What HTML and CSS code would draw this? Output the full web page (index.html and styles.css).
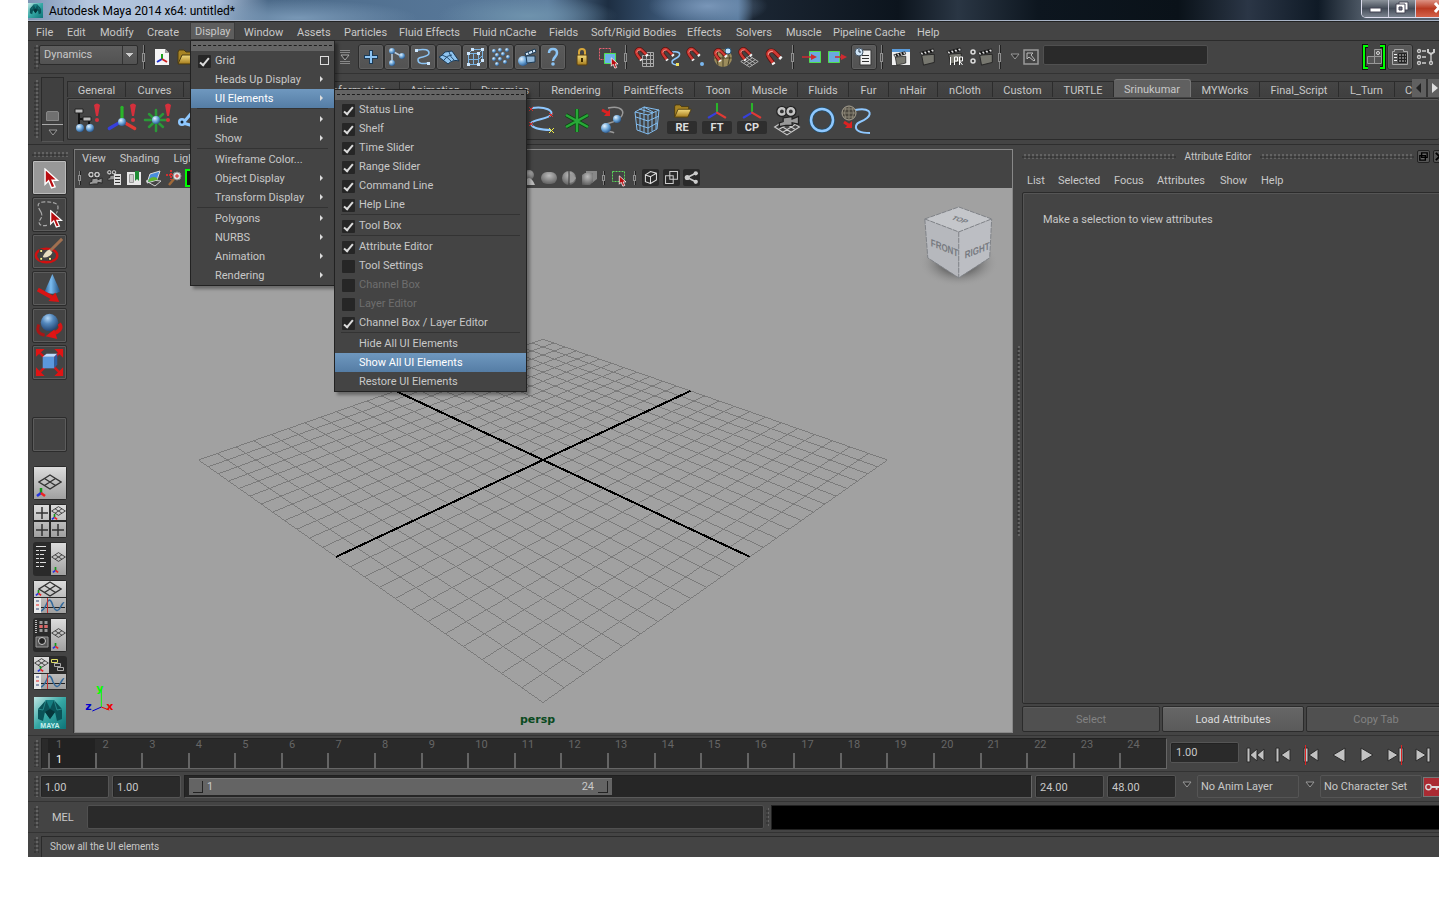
FILE: index.html
```html
<!DOCTYPE html>
<html lang="en">
<head>
<meta charset="UTF-8">
<title>Autodesk Maya 2014 x64: untitled*</title>
<link rel="stylesheet" href="styles.css">
</head>
<body>

<svg class="defs" width="0" height="0" aria-hidden="true">
    <defs>
        <radialGradient id="ball" cx="0.35" cy="0.3" r="0.8"><stop offset="0" stop-color="#e4f3ff"/><stop offset="0.5" stop-color="#6da6d8"/><stop offset="1" stop-color="#1e4a80"/></radialGradient>
        <radialGradient id="bigball" cx="0.4" cy="0.25" r="0.8"><stop offset="0" stop-color="#b4d8f8"/><stop offset="0.4" stop-color="#5488bc"/><stop offset="1" stop-color="#1c3c68"/></radialGradient>
        <radialGradient id="grayball" cx="0.5" cy="0.3" r="0.8"><stop offset="0" stop-color="#bbb"/><stop offset="1" stop-color="#555"/></radialGradient>
        <linearGradient id="cone"><stop offset="0" stop-color="#2a6294"/><stop offset="0.4" stop-color="#7bbcf0"/><stop offset="1" stop-color="#1c4a7a"/></linearGradient>
        <linearGradient id="gold" x2="0" y2="1"><stop offset="0" stop-color="#f4dc80"/><stop offset="1" stop-color="#a67c1c"/></linearGradient>
        <linearGradient id="tile" x2="0" y2="1"><stop offset="0" stop-color="#dcdcdc"/><stop offset="1" stop-color="#a0a0a0"/></linearGradient>
        <linearGradient id="teal" x2="1" y2="1"><stop offset="0" stop-color="#bfe6e4"/><stop offset="0.5" stop-color="#35a7a4"/><stop offset="1" stop-color="#0d7478"/></linearGradient>
    </defs>

    <symbol id="i-maya" viewBox="0 0 32 32">
        <rect width="32" height="32" fill="url(#teal)"/>
        <path d="M4 22V12L12 3h8l8 9v10l-5 2-2-9-5 7-5-7-2 9z" fill="#0a5358"/>
        <path d="M12 3L9 13l-5-1M20 3l3 10 5-1" fill="none" stroke="#2f9d9d" stroke-width="0.700"/>
        <path d="M12 3h8l-4 9z" fill="#167f82"/>
        <path d="M11 15l5 7 5-7-5-3z" fill="#06363b"/>
    </symbol>
    <symbol id="i-tripod" viewBox="0 0 32 32">
        <path d="M16 17V4" stroke="#2ab52a" stroke-width="3" stroke-linecap="round"/>
        <path d="M16 17L4 24" stroke="#3640dc" stroke-width="3" stroke-linecap="round"/>
        <path d="M16 17l12 7" stroke="#e03a34" stroke-width="3" stroke-linecap="round"/>
    </symbol>
    <symbol id="i-bang" viewBox="0 0 8 20"><path d="M1 2q3-3 6 0L5 13H3z" fill="#d5303c"/><circle cx="4" cy="17" r="2" fill="#d5303c"/></symbol>
    <symbol id="i-new" viewBox="0 0 20 20">
        <path d="M3 2h10l4 4v12H3z" fill="#f4f4f4"/><path d="M13 2v4h4z" fill="#999"/>
        <path d="M10 12V7" stroke="#1ba01b" stroke-width="2"/><path d="M10 12l-5 3" stroke="#2030d0" stroke-width="2"/><path d="M10 12l5 3" stroke="#d02020" stroke-width="2"/>
    </symbol>
    <symbol id="i-folder" viewBox="0 0 20 16">
        <path d="M1 14V3l1-2h5l2 2h8v3" fill="#a88424" stroke="#4a3a10"/><path d="M1 15L5 6h15l-4 9z" fill="url(#gold)" stroke="#4a3a10"/>
    </symbol>
    <symbol id="i-cursor" viewBox="0 0 14 18"><path d="M2 1v13l3-3 2.500 6 3-1L8 10.500h4.500z" fill="#b80c10" stroke="#fff" stroke-width="1.200"/></symbol>
    <symbol id="i-magnet" viewBox="0 0 16 16">
        <path d="M7 13L4 9C0 4 5 0 9 4l4 4" fill="none" stroke="#5c120e" stroke-width="4"/>
        <path d="M7 13L4 9C0 4 5 0 9 4l4 4" fill="none" stroke="#d03a34" stroke-width="2.500"/>
        <path d="M3 6q0-3 4-3" fill="none" stroke="#f09a90"/>
        <path d="M7 13l1 1.500M13 8l1.500 1.500" stroke="#f4f4f4" stroke-width="3"/>
    </symbol>
    <symbol id="i-clap" viewBox="0 0 20 20">
        <path d="M3 8l14-1v9L5 19z" fill="#77776f" stroke="#222"/>
        <path d="M1 5l15-4 1 3L3 8z" fill="#ddd" stroke="#222"/><path d="M4 4l2 3M8 3l2 3M12 2l2 3" stroke="#111" stroke-width="2"/>
    </symbol>
    <symbol id="i-camera" viewBox="0 0 20 18">
        <circle cx="6" cy="5" r="4" fill="#c4c4c4" stroke="#222"/><circle cx="13" cy="5" r="4" fill="#c4c4c4" stroke="#222"/>
        <circle cx="6" cy="5" r="1.500" fill="#333"/><circle cx="13" cy="5" r="1.500" fill="#333"/>
        <path d="M7 10l7-1v2l5-2v6l-5-1v2H9l-5 1v-3l3-1z" fill="#999" stroke="#222"/>
    </symbol>
    <symbol id="i-mesh" viewBox="0 0 24 16"><path d="M12 1l11 7-11 7L1 8zM6.500 4.500l11 7M17.500 4.500l-11 7" fill="none" stroke="currentColor" stroke-width="1.400"/></symbol>
    <symbol id="i-floor" viewBox="0 0 24 16"><path d="M12 1l11 7-11 7L1 8zM8.300 3.300l11 7M4.700 5.700l11 7M15.700 3.300l-11 7M19.300 5.700l-11 7" fill="none" stroke="currentColor"/></symbol>
    <symbol id="i-minitri" viewBox="0 0 10 9"><path d="M5 5V0" stroke="#15951a" stroke-width="2.500"/><path d="M5 5L1 8" stroke="#2434e0" stroke-width="2.500"/><path d="M5 5l4 3" stroke="#e22" stroke-width="2.500"/></symbol>
    <symbol id="i-curve" viewBox="0 0 24 15">
        <path d="M0 9.500h24" stroke="#222"/><path d="M0 13Q3 12 6 5t6 3q4 8 7 2t4-5" fill="none" stroke="#33699b" stroke-width="1.500"/><path d="M6.500 0v15" stroke="#c43030"/>
    </symbol>
    <symbol id="i-down" viewBox="0 0 10 8"><path d="M1 1h8L5 6z" fill="#333" stroke="#999"/></symbol>
</svg>

<div class="app">

    <header class="titlebar">
        <svg class="app-icon"><use href="#i-maya"/></svg>
        <h1>Autodesk Maya 2014 x64: untitled*</h1>
        <div class="window-buttons">
            <button aria-label="Minimize"><svg viewBox="0 0 26 17"><rect x="8" y="8" width="11" height="4" fill="#fff" stroke="#445"/></svg></button>
            <button aria-label="Restore"><svg viewBox="0 0 26 17"><path d="M10 2h9v8h-9z" fill="#fff" stroke="#445"/><path d="M7 4h9v9H7z" fill="#fff" stroke="#445"/><path d="M10 7h3v3h-3z" fill="#778" stroke="#445"/></svg></button>
            <button class="close" aria-label="Close"><svg viewBox="0 0 26 17"><path d="M19 3l8 9M27 3l-8 9" stroke="#fff" stroke-width="3"/></svg></button>
        </div>
    </header>

    <nav class="menubar">
        <button>File</button>
        <button>Edit</button>
        <button>Modify</button>
        <button>Create</button>
        <div class="menu-root">
            <button class="open">Display</button>
            <ul class="menu">
                <li class="tearoff"></li>
                <li><label class="item check"><input type="checkbox" checked> Grid</label><button class="option-box" aria-label="Grid options"></button></li>
                <li><button class="item sub">Heads Up Display</button></li>
                <li><button class="item sub active">UI Elements</button>
                    <ul class="menu submenu">
                        <li class="tearoff"></li>
                        <li><label class="item check"><input type="checkbox" checked> Status Line</label></li>
                        <li><label class="item check"><input type="checkbox" checked> Shelf</label></li>
                        <li><label class="item check"><input type="checkbox" checked> Time Slider</label></li>
                        <li><label class="item check"><input type="checkbox" checked> Range Slider</label></li>
                        <li><label class="item check"><input type="checkbox" checked> Command Line</label></li>
                        <li><label class="item check"><input type="checkbox" checked> Help Line</label></li>
                        <li class="rule"></li>
                        <li><label class="item check"><input type="checkbox" checked> Tool Box</label></li>
                        <li class="rule"></li>
                        <li><label class="item check"><input type="checkbox" checked> Attribute Editor</label></li>
                        <li><label class="item check"><input type="checkbox"> Tool Settings</label></li>
                        <li><label class="item check disabled"><input type="checkbox" disabled> Channel Box</label></li>
                        <li><label class="item check disabled"><input type="checkbox" disabled> Layer Editor</label></li>
                        <li><label class="item check"><input type="checkbox" checked> Channel Box / Layer Editor</label></li>
                        <li class="rule"></li>
                        <li><button class="item">Hide All UI Elements</button></li>
                        <li><button class="item active">Show All UI Elements</button></li>
                        <li><button class="item">Restore UI Elements</button></li>
                    </ul>
                </li>
                <li class="rule"></li>
                <li><button class="item sub">Hide</button></li>
                <li><button class="item sub">Show</button></li>
                <li class="rule"></li>
                <li><button class="item">Wireframe Color...</button></li>
                <li><button class="item sub">Object Display</button></li>
                <li><button class="item sub">Transform Display</button></li>
                <li class="rule"></li>
                <li><button class="item sub">Polygons</button></li>
                <li><button class="item sub">NURBS</button></li>
                <li><button class="item sub">Animation</button></li>
                <li><button class="item sub">Rendering</button></li>
            </ul>
        </div>
        <button>Window</button>
        <button>Assets</button>
        <button>Particles</button>
        <button>Fluid Effects</button>
        <button>Fluid nCache</button>
        <button>Fields</button>
        <button>Soft/Rigid Bodies</button>
        <button>Effects</button>
        <button>Solvers</button>
        <button>Muscle</button>
        <button>Pipeline Cache</button>
        <button>Help</button>
    </nav>

    <div class="statusline">
        <span class="grip"></span>
        <select class="menuset" aria-label="Menu set"><option>Dynamics</option></select>
        <span class="sep"></span>
        <div class="group file-group">
            <button class="tool" aria-label="New scene"><svg viewBox="0 0 26 26"><use href="#i-new" x="3" y="3" width="20" height="20"/></svg></button>
            <button class="tool" aria-label="Open scene"><svg viewBox="0 0 26 26"><use href="#i-folder" x="2" y="5" width="20" height="16"/></svg></button>
        </div>
        <button class="tool" aria-label="Selection mask"><svg viewBox="0 0 26 26"><path d="M8 6.500h10M8 8.500h10M8 17.500h10M8 19.500h10" stroke="#888"/><path d="M9 11h8l-4 5z" fill="#333" stroke="#aaa"/></svg></button>
        <div class="group masks">
            <button class="tool boxed" aria-label="Handles"><svg viewBox="0 0 26 26"><path d="M13 6v14M6 13h14" stroke="#1c3a55" stroke-width="4"/><path d="M13 7v12M7 13h12" stroke="#8cc4f4" stroke-width="2"/></svg></button>
            <button class="tool boxed" aria-label="Joints"><svg viewBox="0 0 26 26"><path d="M8 7v12M8 7l11 6" stroke="#bcd" stroke-width="1.500"/><circle cx="8" cy="7" r="3" fill="url(#ball)"/><circle cx="8" cy="19" r="3" fill="url(#ball)"/><circle cx="18" cy="12" r="3" fill="url(#ball)"/></svg></button>
            <button class="tool boxed" aria-label="Curves"><svg viewBox="0 0 26 26"><path d="M7 6q12-2 12 3c0 5-12 3-11 7 0 4 5 4 10 3" fill="none" stroke="#8cc4f4" stroke-width="1.500"/><path d="M5 5h3v3H5zM17 18h3v3h-3z" fill="#cfe8ff"/></svg></button>
            <button class="tool boxed" aria-label="Surfaces"><svg viewBox="0 0 26 26"><path d="M9 8l7-1 7 10q-6-2-11 3L3 13q3-1 6-5z" fill="#8fc4f0" stroke="#1c3a55"/><path d="M6 11q5 1 10 7M13 8q1 5 6 9M16 11q-5 0-8 5" fill="none" stroke="#234c70"/></svg></button>
            <button class="tool boxed" aria-label="Deformers"><svg viewBox="0 0 26 26"><path d="M6.500 9.500h10v11h-10zM10.500 5.500h10v11M6.500 9.500l4-4M16.500 9.500l4-4M16.500 20.500l4-4M6.500 15.500h10l4-4M11.500 9.500v11" fill="none" stroke="#7ab4e4"/><path d="M5 8h3v3H5zM15 8h3v3h-3zM9 4h3v3H9zM19 4h3v3h-3zM5 19h3v3H5zM15 19h3v3h-3zM19 15h3v3h-3z" fill="#cfe8ff"/></svg></button>
            <button class="tool boxed" aria-label="Dynamics"><svg viewBox="0 0 26 26"><g fill="url(#ball)"><circle cx="6" cy="7" r="2"/><circle cx="12" cy="6" r="2"/><circle cx="19" cy="6" r="2"/><circle cx="9" cy="11" r="2"/><circle cx="15" cy="10" r="2"/><circle cx="20" cy="13" r="2"/><circle cx="6" cy="15" r="2"/><circle cx="12" cy="15" r="2"/><circle cx="17" cy="18" r="2"/><circle cx="9" cy="20" r="2"/></g></svg></button>
            <button class="tool boxed" aria-label="Rendering"><svg viewBox="0 0 26 26"><circle cx="9" cy="17" r="5" fill="url(#ball)"/><path d="M12 12h9v6l-8 1z" fill="#8fb4d4" stroke="#1c3a55"/><path d="M11 9l10-4 1 3-10 4z" fill="#cfe4f6" stroke="#1c3a55"/><path d="M14 8l1 2M18 6l1 3" stroke="#1c3a55"/></svg></button>
            <button class="tool boxed" aria-label="Miscellaneous"><svg viewBox="0 0 26 26"><path d="M9 9q0-4 4-4t4 4q0 2-2 4t-2 4" fill="none" stroke="#8cc4f4" stroke-width="2.500"/><circle cx="13" cy="20" r="1.800" fill="#8cc4f4"/></svg></button>
        </div>
        <div class="group">
            <button class="tool" aria-label="Lock selection"><svg viewBox="0 0 26 26"><path d="M10 13V8q0-3 3-3t3 3v5" fill="none" stroke="#d9a83a" stroke-width="2"/><rect x="8" y="11" width="10" height="10" rx="1" fill="url(#gold)" stroke="#5a4010"/><path d="M13 14v4" stroke="#3a2800" stroke-width="2"/></svg></button>
            <button class="tool" aria-label="Highlight selection"><svg viewBox="0 0 26 26"><path d="M4.500 4.500h11v11h-11z" fill="none" stroke="#e86070" stroke-dasharray="2 1"/><path d="M9.500 9.500h11v10h-11z" fill="#6ab0e8" stroke="#50e050"/><use href="#i-cursor" x="15" y="13" width="9" height="12"/></svg></button>
        </div>
        <span class="sep"></span>
        <div class="group">
            <button class="tool" aria-label="Snap to grids"><svg viewBox="0 0 26 26"><path d="M10.500 11.500h11v11h-11zM14.500 8.500v14M18.500 8.500v14M10.500 15.500h11M10.500 19.500h11M14.500 8.500h7v3" fill="none" stroke="#aaa"/><use href="#i-magnet" x="2" y="3" width="15" height="15"/></svg></button>
            <button class="tool" aria-label="Snap to curves"><svg viewBox="0 0 26 26"><path d="M14 8c6-1 9 1 7 4s-7 3-7 6 4 3 7 3" fill="none" stroke="#8fc8ff" stroke-width="1.500"/><path d="M18 19h3v3h-3z" fill="#f0e060"/><use href="#i-magnet" x="2" y="3" width="15" height="15"/></svg></button>
            <button class="tool" aria-label="Snap to points"><svg viewBox="0 0 26 26"><circle cx="18" cy="20" r="2" fill="#7ab8f0"/><use href="#i-magnet" x="2" y="3" width="15" height="15"/></svg></button>
            <button class="tool" aria-label="Snap to projected center"><svg viewBox="0 0 26 26"><circle cx="13" cy="14" r="9" fill="#9c8c5c"/><path d="M4 14h18M13 5v18M8 7q-3 7 0 14M18 7q3 7 0 14" fill="none" stroke="#4a4228"/><circle cx="18" cy="7" r="3" fill="#bfe2ff" stroke="#27567c"/><use href="#i-magnet" x="3" y="4" width="15" height="15"/></svg></button>
            <button class="tool" aria-label="Snap to view planes"><svg viewBox="0 0 26 26"><g color="#c8c8c8"><use href="#i-floor" x="4" y="11" width="19" height="13"/></g><use href="#i-magnet" x="2" y="3" width="15" height="15"/></svg></button>
            <button class="tool" aria-label="Make live"><svg viewBox="0 0 26 26"><use href="#i-magnet" x="3" y="4" width="18" height="18"/></svg></button>
        </div>
        <span class="sep"></span>
        <div class="group">
            <button class="tool" aria-label="Inputs"><svg viewBox="0 0 26 26"><path d="M10.500 7.500h11v11h-11z" fill="#6aaae0" stroke="#50e050"/><path d="M3 13h10" stroke="#d02a30" stroke-width="1.500"/><path d="M12 10l6 3-6 3z" fill="#d02a30"/></svg></button>
            <button class="tool" aria-label="Outputs"><svg viewBox="0 0 26 26"><path d="M3.500 7.500h11v11h-11z" fill="#6aaae0" stroke="#50e050"/><path d="M10 13h8" stroke="#d02a30" stroke-width="1.500"/><path d="M16 10l6 3-6 3z" fill="#d02a30"/></svg></button>
            <button class="tool boxed" aria-label="Construction history"><svg viewBox="0 0 26 26"><path d="M9 6h11v15H9z" fill="#f0f0f0" stroke="#333"/><path d="M11 11.500h7M11 14.500h7M11 17.500h7" stroke="#333"/><circle cx="8" cy="8" r="4" fill="#cfe4f6" stroke="#456"/><path d="M8 5v3h2" fill="none" stroke="#234"/></svg></button>
        </div>
        <span class="sep"></span>
        <div class="group render-group">
            <button class="tool" aria-label="Render view"><svg viewBox="0 0 26 26"><rect x="4" y="5" width="18" height="16" fill="#f0f0f0"/><rect x="4" y="5" width="18" height="3" fill="#5a9ad8"/><use href="#i-clap" x="5" y="7" width="15" height="15"/></svg></button>
            <button class="tool" aria-label="Render current frame"><svg viewBox="0 0 26 26"><use href="#i-clap" x="4" y="4" width="18" height="18"/></svg></button>
            <button class="tool" aria-label="IPR render"><svg viewBox="0 0 26 26"><use href="#i-clap" x="4" y="3" width="18" height="18"/><path d="M8.500 13v8M12.500 21v-8h3v4h-3M17.500 21v-8h3v4h-3l3 4" fill="none" stroke="#fff"/></svg></button>
            <button class="tool" aria-label="Render settings"><svg viewBox="0 0 26 26"><use href="#i-clap" x="8" y="4" width="18" height="18"/><circle cx="4" cy="8" r="2" fill="none" stroke="#ddd" stroke-width="1.500"/><circle cx="4" cy="17" r="2" fill="none" stroke="#ddd" stroke-width="1.500"/></svg></button>
        </div>
        <span class="sep"></span>
        <svg class="drop" aria-hidden="true"><use href="#i-down"/></svg>
        <button class="input-mode" aria-label="Input operations"><svg viewBox="0 0 16 16"><path d="M1 1h14v14H1z" fill="none" stroke="#999" stroke-width="1.500"/><path d="M4 4h6L8 6l4 5-1 1-5-4-2 2z" fill="none" stroke="#bbb"/></svg></button>
        <input class="quick-field" type="text" aria-label="Select by name">
        <div class="group sidebar-group">
            <button class="tool" aria-label="Modeling toolkit"><svg viewBox="0 0 26 26"><path d="M7 2H3v22h4M19 2h4v22h-4" fill="none" stroke="#111" stroke-width="4"/><path d="M7 2H3v22h4M19 2h4v22h-4" fill="none" stroke="#0f0" stroke-width="2"/><path d="M6.500 12.500h7v7h-7zM13.500 12.500h7v7h-7zM13.500 5.500h7v7h-7z" fill="#555" stroke="#999"/><circle cx="17" cy="9" r="1.500" fill="none" stroke="#ddd"/></svg></button>
            <button class="tool boxed" aria-label="Attribute editor"><svg viewBox="0 0 26 26"><path d="M5.500 7.500h2v-2h9v2h4v13h-15z" fill="#555" stroke="#aaa"/><path d="M7 10.500h3M7 13.500h3M7 16.500h3" stroke="#eee"/><path d="M11 9h9v10h-9z" fill="#777"/><path d="M11.500 9.500h8v9h-8zM14.500 9v10M17.500 9v10M11 12.500h9M11 15.500h9" fill="none" stroke="#222"/></svg></button>
            <button class="tool" aria-label="Tool settings"><svg viewBox="0 0 26 26"><g fill="none" stroke="#ccc" stroke-width="1.300"><circle cx="6" cy="7" r="1.500"/><circle cx="6" cy="13" r="1.500"/><circle cx="6" cy="19" r="1.500"/><path d="M9 7h4M9 13h4M9 19h4M18 10v8"/><circle cx="18" cy="19" r="1.500"/><path d="M15 5v3l3 2 3-2V5" stroke-width="2"/></g></svg></button>
        </div>
    </div>

    <div class="shelf">
        <span class="grip"></span>
        <div class="shelf-switch">
            <button aria-label="Shelf tabs"></button>
            <button aria-label="Shelf menu"><svg class="drop"><use href="#i-down"/></svg></button>
        </div>
        <div class="shelf-body">
            <div class="tabs">
                <button>General</button>
                <button>Curves</button>
                <button>Surfaces</button>
                <button>Polygons</button>
                <button>Deformation</button>
                <button>Animation</button>
                <button>Dynamics</button>
                <button>Rendering</button>
                <button>PaintEffects</button>
                <button>Toon</button>
                <button>Muscle</button>
                <button>Fluids</button>
                <button>Fur</button>
                <button>nHair</button>
                <button>nCloth</button>
                <button>Custom</button>
                <button>TURTLE</button>
                <button class="current">Srinukumar</button>
                <button>MYWorks</button>
                <button>Final_Script</button>
                <button>L_Turn</button>
                <button class="cut">Custom2</button>
                <div class="tab-arrows">
                    <button aria-label="Scroll left"><svg viewBox="0 0 14 18"><path d="M9 4v10L4 9z" fill="#222"/></svg></button>
                    <button aria-label="Scroll right"><svg viewBox="0 0 14 18"><path d="M4 4v10l6-5z" fill="#ddd"/></svg></button>
                </div>
            </div>
            <div class="shelf-tools">
                <button aria-label="Hierarchy"><svg viewBox="0 0 34 34"><path d="M9 9v16M9 16h10v8" fill="none" stroke="#111" stroke-width="2"/><path d="M5 6h8v4H5zM13 14h8v4h-8z" fill="#bbb" stroke="#222"/><circle cx="10" cy="25" r="4" fill="url(#ball)"/><circle cx="20" cy="25" r="4" fill="url(#ball)"/><use href="#i-bang" x="23" y="0" width="8" height="20"/></svg></button>
                <button aria-label="Axis"><svg viewBox="0 0 34 34"><use href="#i-tripod" width="34" height="34"/><circle cx="17" cy="19" r="4" fill="url(#ball)"/><use href="#i-bang" x="24" y="0" width="8" height="20"/></svg></button>
                <button aria-label="Locator"><svg viewBox="0 0 34 34"><path d="M16 7v21M5 17h22M9 11l14 13M23 11L9 24" stroke="#2a9a38" stroke-width="2.500" stroke-linecap="round"/><circle cx="16" cy="17" r="4" fill="url(#ball)"/><use href="#i-bang" x="24" y="0" width="8" height="20"/></svg></button>
                <button aria-label="Joint tool"><svg viewBox="0 0 34 34"><path d="M8 20L20 6M8 20l14 4" stroke="#8fc8ff" stroke-width="3"/><circle cx="7" cy="19" r="4" fill="#8fc8ff"/><circle cx="7" cy="19" r="1.500" fill="#123"/><circle cx="22" cy="25" r="4" fill="url(#ball)"/></svg></button>
                <button class="after-menu" aria-label="EP curve"><svg viewBox="0 0 34 34"><path d="M7 5c14-2 22 3 19 7S5 17 6 21s10 6 20 6" fill="none" stroke="#8fc8ff" stroke-width="2"/><path d="M4 4l4 4M8 4L4 8M24 10l4 4M28 10l-4 4M4 19l4 4M8 19l-4 4" stroke="#d33"/><path d="M24 25l5 5M29 25l-5 5" stroke="#ee4"/></svg></button>
                <button aria-label="Star"><svg viewBox="0 0 34 34"><path d="M17 6v23M6 12l22 12M28 12L6 24" stroke="#0c4a12" stroke-width="4"/><path d="M17 6v23M6 12l22 12M28 12L6 24" stroke="#28a838" stroke-width="2.500"/></svg></button>
                <button aria-label="Cluster"><svg viewBox="0 0 34 34"><path d="M13 5c14-3 18 4 12 10S6 20 9 25s8 3 10 5" fill="none" stroke="#999" stroke-width="1.500"/><path d="M7 7l6 3" stroke="#d22" stroke-width="3"/><path d="M15 6v7H9z" fill="#d22"/><circle cx="11" cy="25" r="5" fill="url(#ball)"/><circle cx="22" cy="16" r="4" fill="url(#ball)"/></svg></button>
                <button aria-label="Lattice"><svg viewBox="0 0 34 34"><path d="M5 9l13 3v19L7 27zM5 9l9-5 15 3-11 5M29 7l-2 19-9 5M14 4v6M6 14l12 4 11-5M6 21l12 4 9-5M10 10v18M14 11v18M22 10v18M26 9v17M9 6l14 4M14 4l9 5" fill="none" stroke="#82bdf0"/></svg></button>
                <button aria-label="RE"><svg viewBox="0 0 34 34"><use href="#i-folder" x="8" y="1" width="19" height="14"/></svg><b>RE</b></button>
                <button aria-label="FT"><svg viewBox="0 0 34 34"><use href="#i-tripod" x="6" y="-2" width="22" height="22"/></svg><b>FT</b></button>
                <button aria-label="CP"><svg viewBox="0 0 34 34"><use href="#i-tripod" x="6" y="-2" width="22" height="22"/></svg><b>CP</b></button>
                <button aria-label="Camera"><svg viewBox="0 0 34 34"><g color="#ccc"><use href="#i-floor" x="2" y="15" width="30" height="18"/></g><use href="#i-camera" x="4" y="2" width="26" height="23"/></svg></button>
                <button aria-label="Circle"><svg viewBox="0 0 34 34"><circle cx="17" cy="17" r="11" fill="none" stroke="#24506e" stroke-width="4"/><circle cx="17" cy="17" r="11" fill="none" stroke="#8fc8ff" stroke-width="2.500"/></svg></button>
                <button aria-label="Motion path"><svg viewBox="0 0 34 34"><path d="M15 7c14-3 18 3 12 8s-10 3-11 8 5 7 14 7" fill="none" stroke="#8fc8ff" stroke-width="2"/><circle cx="9" cy="10" r="7" fill="#4c4840" stroke="#aaa495"/><path d="M2 10h14M9 3v14M3 6h12M3 14h12M6 4q-3 6 0 12M12 4q3 6 0 12" fill="none" stroke="#8a8475"/><path d="M4 19l6 4" stroke="#d22" stroke-width="3"/><path d="M12 18v7H5z" fill="#d22"/></svg></button>
            </div>
        </div>
    </div>

    <main class="workspace">
        <aside class="toolbox">
            <span class="dots"></span>
            <div class="tools">
                <button class="current" aria-label="Select tool"><svg viewBox="0 0 34 34"><use href="#i-cursor" x="10" y="7" width="17" height="22"/></svg></button>
                <button aria-label="Lasso tool"><svg viewBox="0 0 34 34"><path d="M8 14Q1 4 12 4t13 3-1 9M8 14q3 5-2 10 0 6 9 4" fill="none" stroke="#aaa" stroke-width="1.200" stroke-dasharray="4 2"/><use href="#i-cursor" x="16" y="12" width="15" height="19"/></svg></button>
                <button aria-label="Paint selection tool"><svg viewBox="0 0 34 34"><ellipse cx="14" cy="21" rx="11" ry="7" fill="none" stroke="#d01010" stroke-width="2.500"/><path d="M18 16L30 4" stroke="#a07050" stroke-width="3"/><path d="M10 23q2-6 7-8l3 3q-3 6-10 5z" fill="#e8dcc0"/><path d="M7 15h3v3H7zM7 23h3v3H7zM16 23h3v3h-3z" fill="#fff490" stroke="#333"/></svg></button>
                <button aria-label="Move tool"><svg viewBox="0 0 34 34"><path d="M20 2l8 18q-8 5-16 0z" fill="url(#cone)"/><path d="M5 18l16 9" stroke="#d81414" stroke-width="4"/><path d="M23 21l4 10-11-1z" fill="#d81414"/></svg></button>
                <button aria-label="Rotate tool"><svg viewBox="0 0 34 34"><path d="M6 16q-4 9 6 11" fill="none" stroke="#a81616" stroke-width="3"/><circle cx="17" cy="14" r="9" fill="url(#bigball)"/><path d="M27 15q5 7-8 11" fill="none" stroke="#d81414" stroke-width="4"/><path d="M22 21l-9 7 12 3z" fill="#e01414"/></svg></button>
                <button aria-label="Scale tool"><svg viewBox="0 0 34 34"><path d="M7 7l20 20M27 7L7 27" stroke="#d81414" stroke-width="2.500"/><path d="M3 3h9l-9 8zM31 3v9l-9-9zM3 31v-9l9 9zM31 31h-9l9-9z" fill="#e01414"/><path d="M10 11h12v12H10z" fill="#5b98dc"/><path d="M10 11l4-3h11l-3 3z" fill="#bcdcff"/><path d="M22 11l3-3v11l-3 4z" fill="#2c5ea4"/></svg></button>
            </div>
            <button class="last-tool" aria-label="Last tool"></button>
            <div class="layouts">
                <button aria-label="Single perspective"><svg viewBox="0 0 34 34"><rect x="1" y="1" width="32" height="32" fill="url(#tile)"/><use href="#i-mesh" x="5" y="8" width="24" height="16"/><use href="#i-minitri" x="3" y="22" width="10" height="9"/></svg></button>
                <button aria-label="Four view"><svg viewBox="0 0 34 34"><path d="M1 1h15v15H1zM18 1h15v15H18zM1 18h15v15H1zM18 18h15v15H18z" fill="url(#tile)"/><path d="M9 3v12M3 9h12M9 20v12M3 26h12M25 20v12M19 26h12" stroke="#333" stroke-width="1.500"/><use href="#i-mesh" x="18" y="2" width="15" height="10"/><use href="#i-minitri" x="18" y="10" width="7" height="6"/></svg></button>
                <button aria-label="Outliner and perspective"><svg viewBox="0 0 34 34"><path d="M18 1h15v32H18z" fill="url(#tile)"/><path d="M3 4.500h10M3 8.500h3M7 8.500h6M3 12.500h3M7 12.500h4M3 16.500h3M7 16.500h4M3 20.500h3M7 20.500h6M3 24.500h3M7 24.500h4" stroke="#ddd"/><use href="#i-mesh" x="18" y="10" width="15" height="10"/><use href="#i-minitri" x="19" y="25" width="7" height="6"/></svg></button>
                <button aria-label="Perspective and graph"><svg viewBox="0 0 34 34"><path d="M1 1h32v16H1zM1 18h32v15H1z" fill="url(#tile)"/><use href="#i-mesh" x="5" y="1" width="24" height="16"/><use href="#i-minitri" x="2" y="10" width="7" height="6"/><path d="M1 18h7v15H1z" fill="#e8e8e8"/><path d="M3 21h3M3 29h3" stroke="#347"/><path d="M3 25h3" stroke="#e22"/><use href="#i-curve" x="8" y="18" width="24" height="15"/></svg></button>
                <button aria-label="Hypershade and perspective"><svg viewBox="0 0 34 34"><path d="M18 1h15v32H18z" fill="url(#tile)"/><path d="M3 2v13" stroke="#bbb" stroke-width="2" stroke-dasharray="1 1"/><path d="M8 3v11M13 3v11" stroke="#999" stroke-width="3" stroke-dasharray="3 1"/><path d="M8 7v3M13 7v3" stroke="#d66" stroke-width="3"/><path d="M3 19h12v10H3z" fill="#555" stroke="#999"/><circle cx="9" cy="23" r="3.500" fill="#222" stroke="#ccc"/><use href="#i-mesh" x="18" y="10" width="15" height="10"/><use href="#i-minitri" x="19" y="25" width="7" height="6"/></svg></button>
                <button aria-label="Perspective, hypergraph and graph"><svg viewBox="0 0 34 34"><path d="M1 1h15v16H1zM1 18h32v15H1z" fill="url(#tile)"/><use href="#i-mesh" x="1" y="2" width="15" height="10"/><use href="#i-minitri" x="4" y="10" width="7" height="6"/><path d="M21.500 7.500h6v3h-6zM24.500 11.500h6v3h-6z" fill="none" stroke="#aaa"/><path d="M18.500 3.500h6v3h-6z" fill="none" stroke="#dd6"/><path d="M1 18h7v15H1z" fill="#e8e8e8"/><path d="M3 21h3M3 29h3" stroke="#347"/><path d="M3 25h3" stroke="#e22"/><use href="#i-curve" x="8" y="18" width="24" height="15"/></svg></button>
            </div>
            <svg class="maya-logo" viewBox="0 0 32 32"><use href="#i-maya" width="32" height="32"/><text x="16" y="31" text-anchor="middle">MAYA</text></svg>
        </aside>

        <section class="panel">
            <div class="panel-menu">
                <button>View</button>
                <button>Shading</button>
                <button>Lighting</button>
            </div>
            <div class="panel-tools">
                <span class="sep small"></span>
                <button aria-label="Select camera"><svg viewBox="0 0 20 20"><use href="#i-camera" x="2" y="2" width="17" height="16"/></svg></button>
                <button aria-label="Camera attributes"><svg viewBox="0 0 20 20"><use href="#i-camera" x="1" y="1" width="14" height="12"/><path d="M10 6h7v11h-7z" fill="#ddd"/><path d="M11 8.500h5M11 11.500h5M11 14.500h5" stroke="#333"/></svg></button>
                <button aria-label="Bookmarks"><svg viewBox="0 0 20 20"><path d="M3 4h14v13H3z" fill="#e8e8e8"/><path d="M5.500 6.500h4v8h-4z" fill="#ccc" stroke="#999"/><path d="M11 3h4v10l-2-2-2 2z" fill="#1f8c36"/></svg></button>
                <button aria-label="Image plane"><svg viewBox="0 0 20 20"><path d="M2 13l5-1 10 1-6 5z" fill="none" stroke="#ccc"/><path d="M6 6l10-3-3 9-10 3z" fill="#4a8edc" stroke="#ddd"/><path d="M5 11q5-4 9 0l-1 1-9 2z" fill="#62b430"/></svg></button>
                <button aria-label="2D pan and zoom"><svg viewBox="0 0 20 20"><path d="M7 2v10M2 7h10" stroke="#d03030" stroke-width="2" stroke-dasharray="2 1"/><circle cx="13" cy="8" r="4" fill="#ddd" stroke="#888"/><path d="M11 8h4M13 6v4" stroke="#d22"/><path d="M10 11l-5 6" stroke="#a06838" stroke-width="2.500"/></svg></button>
                <button aria-label="Grid"><svg viewBox="0 0 20 20"><path d="M2 2h18v16H2z" fill="#111" stroke="#0f0" stroke-width="2"/></svg></button>
                <div class="panel-shading">
                    <button aria-label="Wireframe"><svg viewBox="0 0 20 20"><circle cx="10" cy="7" r="5" fill="url(#grayball)"/><path d="M4 17q6-14 12 0z" fill="#bbb"/></svg></button>
                    <button aria-label="Shaded"><svg viewBox="0 0 20 20"><rect x="2" y="4" width="16" height="12" rx="6" fill="url(#grayball)"/></svg></button>
                    <button aria-label="Half shaded"><svg viewBox="0 0 20 20"><circle cx="10" cy="10" r="7" fill="url(#grayball)"/><path d="M10 5l4 2 3 3-3 4-4 1z" fill="#999"/><path d="M10 3v14" stroke="#333"/></svg></button>
                    <button aria-label="Textured"><svg viewBox="0 0 20 20"><path d="M7 3h11v8l-5 4H7z" fill="#888"/><path d="M3 7l3-2h8v9l-3 3H3z" fill="url(#grayball)"/></svg></button>
                    <span class="sep small"></span>
                    <button class="wide" aria-label="Isolate select"><svg viewBox="0 0 20 20"><path d="M3.500 3.500h12v10h-12z" fill="none" stroke="#5ad85a" stroke-dasharray="2 1"/><use href="#i-cursor" x="9" y="7" width="9" height="12"/></svg></button>
                    <span class="sep small"></span>
                    <button class="wide dark" aria-label="X-ray"><svg viewBox="0 0 20 20"><path d="M4 7l6 2v8l-6-2zM4 7l6-4 7 2v8l-7 4M10 9l7-4" fill="none" stroke="#ddd" stroke-width="1.200"/></svg></button>
                    <button class="dark" aria-label="X-ray active"><svg viewBox="0 0 20 20"><path d="M3 8h9v9H3zM8 3h9v9H8z" fill="none" stroke="#ccc" stroke-width="1.200"/></svg></button>
                    <button class="dark" aria-label="X-ray joints"><svg viewBox="0 0 20 20"><path d="M15 5L5 10l10 5" fill="none" stroke="#ccc" stroke-width="2"/><circle cx="5" cy="10" r="3" fill="#ccc"/><circle cx="15" cy="5" r="2.500" fill="#ccc"/><circle cx="15" cy="15" r="2.500" fill="#ccc"/></svg></button>
                </div>
            </div>
            <svg class="viewport" viewBox="0 0 938 545" role="img" aria-label="Perspective view">
                <defs>
                    <radialGradient id="shadow"><stop offset="0.4" stop-color="#666"/><stop offset="1" stop-color="#a1a1a1" stop-opacity="0"/></radialGradient>
                </defs>
                <path id="gridLines" class="grid-lines"/>
                <path id="gridAxes" class="grid-axes"/>
                <g class="viewcube">
                    <ellipse cx="885" cy="75" rx="40" ry="24" fill="url(#shadow)"/>
                    <path d="M851 31l34-12 33 12-33 13z" fill="#c4c6ca"/>
                    <path d="M851 31l34 13v46l-31-20z" fill="#b6b8bd"/>
                    <path d="M918 31l-33 13v46l31-20z" fill="#bcbec3"/>
                    <path d="M851 31l34-12 33 12-33 13zM885 44v46M851 31l3 39 31 20 31-20 2-39" class="cube-edges"/>
                    <text transform="matrix(1 0.400 0 1.300 857 58)">FRONT</text>
                    <text transform="matrix(1 -0.400 0 1.300 891 71)">RIGHT</text>
                    <text transform="matrix(0.900 0.300 -0.700 0.600 877 31)">TOP</text>
                </g>
                <path d="M26 520v-18" stroke="#0f0"/><path d="M26 520l-9 4" stroke="#00c"/><path d="M26 520l8 3" stroke="#e00"/>
                <text class="axis" x="21" y="505" fill="#0f0">y</text>
                <text class="axis" x="10" y="523" fill="#00c">z</text>
                <text class="axis" x="31" y="523" fill="#e00">x</text>
                <text class="camera-name" x="463" y="536" text-anchor="middle">persp</text>
            </svg>
        </section>

        <aside class="attributes">
            <span class="split"></span>
            <div class="attr-body">
                <div class="attr-title">
                    <span class="dots"></span>
                    <h2>Attribute Editor</h2>
                    <span class="dots"></span>
                    <button aria-label="Float"><svg viewBox="0 0 12 12"><path d="M4 2h6v5H4zM2 5h6v5H2z" fill="#666" stroke="#000" stroke-width="1.500"/></svg></button>
                    <button aria-label="Close editor"><svg viewBox="0 0 12 12"><path d="M2 2l8 8M10 2l-8 8" stroke="#000" stroke-width="2"/></svg></button>
                </div>
                <div class="attr-menu">
                    <button>List</button>
                    <button>Selected</button>
                    <button>Focus</button>
                    <button>Attributes</button>
                    <button>Show</button>
                    <button>Help</button>
                </div>
                <div class="attr-content">
                    <p>Make a selection to view attributes</p>
                </div>
                <div class="attr-buttons">
                    <button disabled>Select</button>
                    <button>Load Attributes</button>
                    <button disabled>Copy Tab</button>
                </div>
            </div>
        </aside>
    </main>

    <div class="timeline">
        <span class="grip"></span>
        <ol class="frames" id="frames"></ol>
        <input class="field" type="text" value="1.00" aria-label="Current time">
        <div class="playback">
            <button aria-label="Go to start"><svg viewBox="0 0 28 28"><path d="M5 7h3v14H5zM15 8v12l-7-6zM22 8v12l-7-6z" class="play"/></svg></button>
            <button aria-label="Step back key"><svg viewBox="0 0 28 28"><path d="M6 7h3v14H6zM20 8v12l-9-6z" class="play"/></svg></button>
            <button aria-label="Step back frame"><svg viewBox="0 0 28 28"><path d="M6 7h4v14H6zM20 8v12l-9-6z" class="play"/><path d="M7.500 4v20" stroke="#d22"/></svg></button>
            <button aria-label="Play backwards"><svg viewBox="0 0 28 28"><path d="M19 7v14L7 14z" class="play"/></svg></button>
            <button aria-label="Play forwards"><svg viewBox="0 0 28 28"><path d="M7 7v14l12-7z" class="play"/></svg></button>
            <button aria-label="Step forward frame"><svg viewBox="0 0 28 28"><path d="M6 8v12l10-6zM17 7h4v14h-4z" class="play"/><path d="M19.500 4v20" stroke="#d22"/></svg></button>
            <button aria-label="Step forward key"><svg viewBox="0 0 28 28"><path d="M6 8v12l10-6zM17 7h3v14h-3z" class="play"/></svg></button>
        </div>
    </div>

    <div class="rangeline">
        <span class="grip"></span>
        <input class="field" type="text" value="1.00" aria-label="Animation start">
        <input class="field" type="text" value="1.00" aria-label="Playback start">
        <div class="range-track">
            <div class="range-bar"><i></i><span>1</span><span class="range-end">24</span><i></i></div>
        </div>
        <input class="field" type="text" value="24.00" aria-label="Playback end">
        <input class="field" type="text" value="48.00" aria-label="Animation end">
        <svg class="drop" aria-hidden="true"><use href="#i-down"/></svg>
        <select class="flat-select" aria-label="Anim layer"><option>No Anim Layer</option></select>
        <svg class="drop" aria-hidden="true"><use href="#i-down"/></svg>
        <select class="flat-select" aria-label="Character set"><option>No Character Set</option></select>
        <button class="autokey" aria-label="Auto key"><svg viewBox="0 0 20 16"><circle cx="5" cy="8" r="3" fill="none" stroke="#ddd" stroke-width="1.500"/><path d="M8 8h12M14 8v3" stroke="#ddd" stroke-width="2"/></svg></button>
    </div>

    <div class="commandline">
        <span class="grip"></span>
        <label for="mel">MEL</label>
        <input id="mel" class="mel" type="text">
        <span class="grip tight"></span>
        <output class="result"></output>
    </div>

    <footer class="helpline">
        <span class="grip"></span>
        <p>Show all the UI elements</p>
    </footer>

</div>

<script src="script.js"></script>
</body>
</html>
```
FILE: styles.css
```css
*, *::before, *::after { box-sizing: border-box; }

body {
    margin: 0;
    background: #fff;
    color: #c8c8c8;
    font: 11px/14px Roboto, Tahoma, sans-serif;
}
button, input, select { font: inherit; color: inherit; }
button { background: none; border: 0; padding: 0; margin: 0; white-space: nowrap; }
svg { display: block; }
ul, ol { list-style: none; margin: 0; padding: 0; }
p, h1, h2 { margin: 0; font-size: 11px; font-weight: normal; }
.defs { position: absolute; }

.app {
    display: flex;
    flex-direction: column;
    height: calc(100vh - 43px);
    min-height: 700px;
    margin: 0 1px 0 28px;
    background: #444;
    overflow: hidden;
}

/* title bar */
.titlebar {
    display: flex;
    align-items: flex-start;
    flex: none;
    height: 22px;
    border-bottom: 1px solid #222;
    box-shadow: inset 0 -1px #a9b4c6;
    background:
        radial-gradient(ellipse 120px 18px at 270px 18px, #7897b5, transparent),
        radial-gradient(ellipse 90px 20px at 500px 16px, #6f93ad, transparent),
        radial-gradient(ellipse 60px 20px at 680px 6px, #7996b8, transparent),
        linear-gradient(90deg, #7d94b4 0, #b4c6de 60px, #a9bcd6 190px, #4d6b8a 240px, #567697 420px, #5c7c9d 520px, #1d2e42 580px, #3c5878 640px, #57799c 710px, #1b2633 725px, #0c141d 870px, #2a3644 930px, #0d161f 1010px, #0a1219 1150px, #2b3646 1220px, #0f1a26 1290px, #56616e 1340px);
}
.app-icon { width: 15px; height: 15px; margin: 3px 6px 0 0; }
.titlebar h1 { color: #000; font: 12px/22px Roboto, sans-serif; }
.window-buttons {
    display: flex;
    height: 18px;
    margin-left: auto;
    margin-right: -22px;
    border: 1px solid #dde;
    border-top: 0;
    border-radius: 0 0 0 5px;
    overflow: hidden;
}
.window-buttons button { width: 27px; border-right: 1px solid #ccd; background: linear-gradient(#8b929a, #444c58 50%, #7a828e); }
.window-buttons .close { width: 44px; background: linear-gradient(#dd9384, #b93a22 50%, #d4624a); }
.window-buttons svg { width: 26px; height: 17px; }

/* menu bar */
.menubar {
    display: grid;
    grid-template-columns: 31px 33px 47px 48px 49px 53px 47px 55px 74px 76px 42px 96px 49px 50px 47px 84px 1fr;
    flex: none;
    height: 19px;
    padding-left: 3px;
    border-bottom: 1px solid #2b2b2b;
}
.menubar > button, .menu-root > button { height: 18px; padding: 3px 0 0 5px; text-align: left; }
.menu-root { position: relative; }
.menu-root > .open { width: 45px; padding: 2px 0 0 4px; background: #5d5d5d; border: 1px solid #3a3a3a; }

.menu {
    position: absolute;
    z-index: 20;
    top: 18px;
    left: 0;
    width: 145px;
    background: #444;
    border: 1px solid #222;
    box-shadow: 3px 3px 3px rgba(0, 0, 0, 0.35);
}
.menu li { position: relative; }
.submenu { top: 0; left: 100%; width: 193px; }
.menu .tearoff { height: 10px; background: #646464; }
.menu .tearoff::after {
    content: "";
    display: block;
    margin: 0 2px;
    padding-top: 4px;
    border-bottom: 1px dashed #1c1c1c;
}
.menu .rule { height: 2px; margin: 0 6px; border-top: 1px solid #333; }
.item {
    display: flex;
    align-items: center;
    width: 100%;
    height: 19px;
    padding-top: 1px;
    padding-left: 24px;
    text-align: left;
}
.item.check { padding-left: 7px; gap: 4px; }
.item.disabled { color: #6e6e6e; }
.item.active { background: linear-gradient(#6f98bf, #557da5); color: #fff; }
.item.sub::after {
    content: "";
    margin-left: auto;
    margin-right: 11px;
    margin-bottom: 2px;
    border: 3px solid transparent;
    border-left-color: #ddd;
    border-right: 0;
}
.check input {
    appearance: none;
    width: 13px;
    height: 13px;
    margin: 0;
    background: #262626;
    border-radius: 1px;
}
.check input:checked::after {
    content: "";
    display: block;
    width: 5px;
    height: 10px;
    margin: 1px 0 0 4px;
    border: solid #ddd;
    border-width: 0 2px 2px 0;
    transform: rotate(40deg);
}
.option-box { position: absolute; right: 5px; top: 5px; width: 9px; height: 9px; border: 1px solid #ddd; }

/* shared bits */
.grip {
    flex: none;
    align-self: stretch;
    width: 5px;
    margin: 4px 2px 4px 6px;
    background: conic-gradient(#777 25%, transparent 0 50%, #2e2e2e 0 75%, transparent 0) 0 0 / 4px 4px;
    opacity: 0.6;
}
.grip.tight { width: 3px; margin: 6px 2px; }
.dots {
    height: 5px;
    background: conic-gradient(#777 25%, transparent 0 50%, #2e2e2e 0 75%, transparent 0) 0 0 / 4px 4px;
    opacity: 0.6;
}
.sep {
    position: relative;
    flex: none;
    width: 10px;
    height: 24px;
    background: linear-gradient(90deg, transparent 4px, #808080 0 5px, #222 0 6px, transparent 0);
}
.sep::after {
    content: "";
    position: absolute;
    left: 3px;
    top: 8px;
    width: 3px;
    height: 9px;
    background: #444;
    border: 1px solid #909090;
}
.sep.small { height: 14px; width: 9px; }
.sep.small::after { top: 4px; height: 6px; }
.drop { width: 10px; height: 8px; flex: none; }
.field {
    width: 69px;
    height: 21px;
    padding: 1px 5px 0;
    background: #2a2a2a;
    border: 1px solid #555;
    border-radius: 2px;
    box-shadow: inset 1px 1px #222;
}

/* status line */
.statusline {
    display: flex;
    align-items: center;
    flex: none;
    height: 33px;
    border-bottom: 1px solid #333;
}
.menuset {
    appearance: none;
    width: 99px;
    height: 20px;
    margin-bottom: 5px;
    margin-left: -2px;
    margin-right: 1px;
    padding: 0 4px;
    border: 1px solid #2c2c2c;
    border-radius: 2px;
    background:
        linear-gradient(45deg, transparent 50%, #ccc 0) right 7px top 7px / 4px 4px no-repeat,
        linear-gradient(-45deg, transparent 50%, #ccc 0) right 3px top 7px / 4px 4px no-repeat,
        linear-gradient(#333, #333) right 14px top 0 / 1px 100% no-repeat,
        linear-gradient(#5e5e5e, #525252);
}
.group { display: flex; flex: none; }
.file-group { width: 183px; }
.masks { margin-right: 3px; }
.render-group { gap: 1px; }
.group + .sep + .group { margin-left: 1px; }
.tool { width: 26px; height: 26px; }
.tool svg { width: 26px; height: 26px; }
.tool.boxed { background: linear-gradient(#5a5a5a, #525252); border-radius: 3px; box-shadow: inset 0 0 0 1px #2c2c2c, inset 0 0 0 2px #606060; }
.statusline > .drop { margin: 0 3px 0 5px; }
.input-mode { width: 17px; height: 17px; margin-right: 3px; }
.input-mode svg { width: 16px; height: 16px; }
.quick-field { width: 165px; height: 20px; margin-bottom: 5px; background: #2a2a2a; border: 1px solid #505050; border-radius: 2px; }
.sidebar-group { margin-left: auto; }

/* shelf */
.shelf { display: flex; flex: none; height: 71px; padding: 2px 0; border-bottom: 1px solid #2e2e2e; }
.shelf-switch { display: flex; flex-direction: column; justify-content: flex-end; flex: none; width: 23px; margin: 1px 3px 0 0; background: #404040; border: 1px solid #2b2b2b; border-bottom-color: #555; }
.shelf-switch button { display: flex; justify-content: center; align-items: center; height: 17px; }
.shelf-switch button:first-child { width: 13px; height: 10px; margin: 0 4px 3px; background: #707070; border: 1px solid #888; border-radius: 2px 2px 0 0; }
.shelf-switch button:last-child { border-top: 1px solid #aaa; }
.shelf-body { flex: 1; min-width: 0; padding-top: 3px; }
.tabs {
    position: relative;
    display: grid;
    grid-template-columns: 59px 58px 64px 64px 88px 71px 69px 73px 82px 47px 56px 51px 40px 49px 55px 60px 61px 77px 69px 79px 56px 60px;
    height: 18px;
    overflow: hidden;
}
.tabs > button { margin-top: 2px; padding-top: 1px; border: 1px solid #2c2c2c; border-width: 1px 1px 0 0; background: linear-gradient(#454545, #3f3f3f); line-height: 14px; }
.tabs > button:first-child { border-left-width: 1px; }
.tabs .current { margin-top: 0; background: #606060; border-radius: 3px 3px 0 0; border-color: #777; line-height: 17px; }
.tabs .cut { text-align: left; padding-left: 10px; border-right: 0; }
.tab-arrows { position: absolute; right: -3px; top: 0; display: flex; gap: 2px; background: #333; }
.tab-arrows button { width: 14px; height: 18px; background: #606060; }
.tab-arrows svg { width: 14px; height: 18px; }
.shelf-tools {
    display: grid;
    grid-template-columns: repeat(24, 35px);
    height: 42px;
    margin-top: 1px;
    padding: 4px 0 0 2px;
    border: 1px solid #2b2b2b;
    border-right: 0;
    border-radius: 2px;
    box-shadow: inset 0 1px #5c5c5c, inset 1px 0 #555;
}
.shelf-tools button { position: relative; width: 34px; height: 34px; }
.shelf-tools svg { width: 34px; height: 34px; }
.shelf-tools .after-menu { grid-column: 14; }
.shelf-tools b {
    position: absolute;
    left: 2px;
    bottom: 3px;
    width: 30px;
    height: 13px;
    background: #2e2e2e;
    border-radius: 2px;
    color: #ddd;
    line-height: 13px;
}

/* workspace */
.workspace { display: flex; flex: 1; min-height: 0; padding: 4px 0 2px; }
.toolbox { display: flex; flex-direction: column; flex: none; width: 46px; padding: 3px 0 0 4px; border-right: 1px solid #303030; }
.toolbox .dots { width: 36px; margin-bottom: 3px; flex: none; }
.tools, .layouts { display: flex; flex-direction: column; gap: 2px; width: 36px; }
.tools button, .last-tool { width: 35px; height: 35px; border: 1px solid #2c2c2c; border-radius: 2px; box-shadow: inset 0 0 0 1px #5c5c5c; }
.tools .current { background: #989898; box-shadow: inset 0 0 0 1px #bbb; }
.tools svg { width: 33px; height: 33px; }
.last-tool { flex: none; margin: 37px 0 14px; }
.layouts { gap: 4px; }
.layouts button { width: 34px; height: 34px; margin-left: 1px; color: #333; background: #2a2a2a; border-radius: 3px; }
.layouts svg { width: 34px; height: 34px; }
.maya-logo { width: 32px; height: 32px; margin: 7px 0 0 2px; flex: none; }
.maya-logo text { font: bold 7px "Liberation Sans", sans-serif; fill: #c6f0ee; }

.panel { display: flex; flex-direction: column; flex: 1; min-width: 0; border: 1px solid #888; border-left-color: #777; }
.panel-menu { display: flex; flex: none; height: 18px; padding-left: 7px; gap: 14px; }
.panel-tools { display: flex; flex: none; align-items: center; height: 20px; padding-bottom: 1px; }
.panel-tools button { width: 20px; height: 20px; flex: none; }
.panel-tools svg { width: 20px; height: 20px; }
.panel-shading { display: flex; align-items: center; margin-left: 315px; }
.panel-shading .wide { margin: 0 1px; }
.panel-shading .dark svg { background: #2a2a2a; width: 17px; height: 17px; margin: auto; border-radius: 2px; }
.viewport { flex: 1; min-height: 0; width: 100%; background: #a1a1a1; }
.grid-lines { fill: none; stroke: #7b7b7b; shape-rendering: crispEdges; }
.grid-axes { fill: none; stroke: #000; stroke-width: 2; shape-rendering: crispEdges; }
.viewcube text { font: bold 8px "Liberation Sans", sans-serif; fill: #777a80; }
.cube-edges { fill: none; stroke: #808388; stroke-dasharray: 5 1; }
.axis { font: bold 11px "DejaVu Sans", sans-serif; }
.camera-name { font: bold 11px "DejaVu Sans", sans-serif; fill: #0a4a20; }

/* attribute editor */
.attributes { display: flex; flex: none; width: 426px; overflow: hidden; }
.split { align-self: center; width: 3px; height: 190px; margin: 0 2px 0 4px; background: conic-gradient(#777 25%, transparent 0 50%, #2e2e2e 0 75%, transparent 0) 0 0 / 3px 4px; opacity: 0.6; }
.attr-body { display: flex; flex-direction: column; flex: 1; margin-right: -7px; }
.attr-title { display: flex; align-items: center; height: 15px; gap: 3px; }
.attr-title .dots { flex: 1; }
.attr-title h2 { padding: 0 6px; font-size: 10px; }
.attr-title button { width: 13px; height: 13px; background: #555; border: 1px solid #222; border-radius: 2px; }
.attr-title svg { width: 11px; height: 11px; }
.attr-menu { display: grid; grid-template-columns: 31px 56px 43px 63px 41px 1fr; height: 28px; padding: 5px 0 0 5px; }
.attr-menu button { height: 23px; text-align: left; }
.attr-content { flex: 1; padding: 20px; border: 1px solid #2b2b2b; border-radius: 2px; box-shadow: inset 1px 1px #555; }
.attr-buttons { display: grid; grid-template-columns: 138px 142px 1fr; gap: 2px; margin: 2px 0 1px; }
.attr-buttons button { height: 26px; padding-top: 1px; border: 1px solid #2b2b2b; border-radius: 2px; background: linear-gradient(#666, #5a5a5a); box-shadow: inset 0 1px #777; color: #ddd; }
.attr-buttons button:disabled { background: #505050; box-shadow: inset 0 1px #5c5c5c; color: #828282; }

/* time slider */
.timeline { display: flex; align-items: center; flex: none; height: 37px; border: solid #333; border-width: 1px 0; }
.frames { display: flex; flex: 1; height: 31px; margin-right: 3px; padding-left: 6px; background: #2a2a2a; border: 1px solid #222; border-bottom-color: #666; border-right-color: #666; color: #666; }
.frames li { position: relative; flex: 1; padding-left: 8px; line-height: 12px; }
.frames li::before { content: ""; position: absolute; left: 0; bottom: 0; width: 2px; height: 15px; background: #646464; }
.frames .now { background: #222; }
.frames .now b { display: block; color: #fff; font-weight: normal; line-height: 18px; }
.playback { display: flex; margin: 2px 1px 0 3px; }
.timeline .field { margin-bottom: 3px; }
.playback svg { width: 28px; height: 28px; }
.play { fill: #c2c2c2; stroke: #2a2a2a; }

/* range slider */
.rangeline { display: flex; align-items: center; flex: none; height: 30px; gap: 3px; border-bottom: 1px solid #333; overflow: hidden; }
.rangeline .grip { margin-right: -2px; }
.rangeline .field { height: 23px; flex: none; padding: 1px 4px 0; }
.range-track { flex: 1; height: 23px; padding: 2px 4px; background: #262626; border: 1px solid #202020; border-right-color: #666; border-bottom-color: #5a5a5a; }
.range-bar { display: flex; align-items: center; width: 423px; max-width: 100%; height: 17px; padding: 0 4px; gap: 4px; background: #646464; border-top: 1px solid #777; }
.range-bar i { width: 10px; height: 12px; border: solid #222; border-width: 0 1px 1px 0; }
.range-bar .range-end { margin-left: auto; }
.rangeline .drop { margin: -3px 2px 0 3px; }
.flat-select { appearance: none; flex: none; width: 102px; height: 23px; padding: 1px 3px 0; background: none; border: 1px solid #555; border-radius: 2px; }
.autokey { flex: none; width: 22px; height: 20px; margin: 0 -6px 0 -2px; background: #aa2b33; border: 1px solid #777; }
.autokey svg { width: 18px; height: 16px; }

/* command and help lines */
.commandline { display: flex; align-items: center; flex: none; height: 31px; border-bottom: 1px solid #333; }
.commandline label { width: 46px; padding: 1px 0 0 11px; }
.mel { flex: 676; min-width: 0; height: 24px; background: #2a2a2a; border: 1px solid #505050; border-radius: 2px; }
.result { flex: 672; min-width: 0; height: 25px; background: #000; border: 1px solid #222; border-right: 0; }
.helpline { display: flex; flex: none; height: 24px; }
.helpline p { flex: 1; margin-top: 3px; padding: 3px 8px 0; border: solid #2a2a2a; border-width: 1px 0 0 1px; font-size: 10px; }
```
FILE: script.js
```js
// ground plane: u and v run from -1 to 1, w does the perspective divide
function project(u, v) {
    var w = 1 - 0.16758 * (u + v);
    var x = 468.5 + 172.5 * (u - v) / w;
    var y = (460 + 3.69 * (u + v)) / w - 187.5;
    return x.toFixed(1) + ' ' + y.toFixed(1);
}

function line(u1, v1, u2, v2) {
    return 'M' + project(u1, v1) + 'L' + project(u2, v2);
}

var grid = '';
for (var i = -12; i <= 12; i++) {
    var t = i / 12;
    grid += line(t, -1, t, 1) + line(-1, t, 1, t);
}
document.getElementById('gridLines').setAttribute('d', grid);
document.getElementById('gridAxes').setAttribute('d', line(0, -1, 0, 1) + line(-1, 0, 1, 0));

var frames = document.getElementById('frames');
for (var f = 1; f <= 24; f++) {
    var li = document.createElement('li');
    li.textContent = f;
    if (f == 1) {
        li.className = 'now';
        li.innerHTML = '1<b>1</b>';
    }
    frames.appendChild(li);
}
```
